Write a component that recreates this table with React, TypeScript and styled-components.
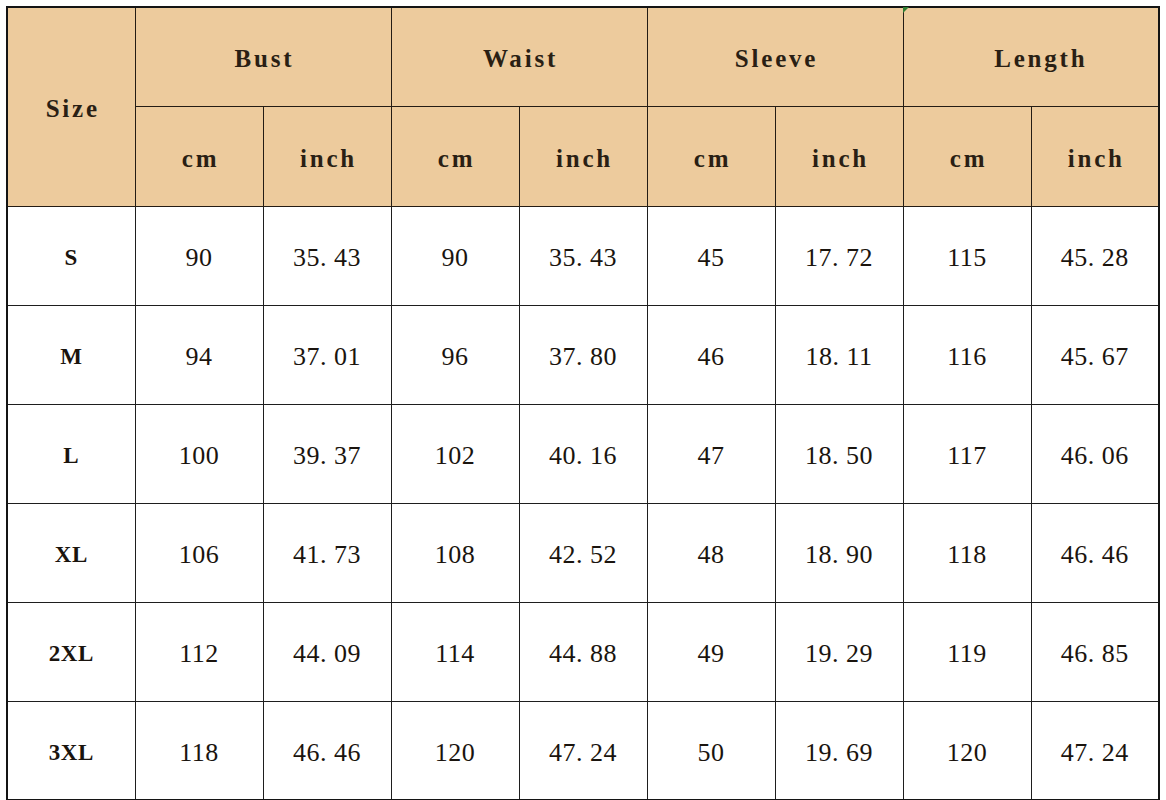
import styled, {createGlobalStyle} from 'styled-components'

const Global = createGlobalStyle`
  html, body {
    margin: 0;
    padding: 0;
    background: #ffffff;
  }
  body {
    width: 1166px;
    height: 800px;
    overflow: hidden;
  }
`

const Page = styled.div`
  padding: 6px 0 0 6px;
`

const Table = styled.table`
  border-collapse: collapse;
  table-layout: fixed;
  width: 1154px;
  border: 2px solid #141414;
  color: #1a140e;
`

const HeadCell = styled.th<{$shift?: number}>`
  position: relative;
  background: #edcb9d;
  border: 1px solid #241c14;
  font-family: 'Liberation Serif', 'DejaVu Serif', serif;
  font-size: 25px;
  font-weight: 700;
  color: #2a1f14;
  letter-spacing: 2.8px;
  text-align: center;
  vertical-align: middle;
  padding: 5px 0 0 ${(p) => 3 + (p.$shift ?? 0)}px;
`

const Marker = styled.span`
  position: absolute;
  left: -1px;
  top: -1px;
  width: 0;
  height: 0;
  border-top: 6px solid #2f7d32;
  border-right: 6px solid transparent;
`

const HeadRow = styled.tr<{$h: number}>`
  height: ${(p) => p.$h}px;
`

const BodyRow = styled.tr`
  height: 99px;
`

const Cell = styled.td<{$size?: boolean}>`
  border: 1px solid #1e1e1e;
  text-align: center;
  vertical-align: middle;
  padding: 5px 0 0 0;
  font-family: 'Liberation Serif', 'DejaVu Serif', serif;
  font-size: ${(p) => (p.$size ? '23px' : '26px')};
  font-weight: ${(p) => (p.$size ? 700 : 400)};
  letter-spacing: 0.5px;
`

const groups = [
  {label: 'Bust', marker: false, shift: 0},
  {label: 'Waist', marker: false, shift: 0},
  {label: 'Sleeve', marker: false, shift: 0},
  {label: 'Length', marker: true, shift: 17},
]

const rows = [
  ['S', '90', '35.43', '90', '35.43', '45', '17.72', '115', '45.28'],
  ['M', '94', '37.01', '96', '37.80', '46', '18.11', '116', '45.67'],
  ['L', '100', '39.37', '102', '40.16', '47', '18.50', '117', '46.06'],
  ['XL', '106', '41.73', '108', '42.52', '48', '18.90', '118', '46.46'],
  ['2XL', '112', '44.09', '114', '44.88', '49', '19.29', '119', '46.85'],
  ['3XL', '118', '46.46', '120', '47.24', '50', '19.69', '120', '47.24'],
]

// numbers in the source are set with a wide full stop, so leave a gap after it
const spaced = (v: string) => v.replace('.', '. ')

export default function App() {
  return (
    <Page>
      <Global />
      <Table>
        <colgroup>
          {Array.from({length: 9}).map((_, i) => (
            <col key={i} style={{width: 128}} />
          ))}
        </colgroup>
        <thead>
          <HeadRow $h={99}>
            <HeadCell rowSpan={2}>Size</HeadCell>
            {groups.map((g) => (
              <HeadCell key={g.label} colSpan={2} $shift={g.shift}>
                {g.marker && <Marker />}
                {g.label}
              </HeadCell>
            ))}
          </HeadRow>
          <HeadRow $h={100}>
            {groups.map((g) => [
              <HeadCell key={g.label + 'cm'}>cm</HeadCell>,
              <HeadCell key={g.label + 'in'}>inch</HeadCell>,
            ])}
          </HeadRow>
        </thead>
        <tbody>
          {rows.map((r) => (
            <BodyRow key={r[0]}>
              {r.map((v, i) => (
                <Cell key={i} $size={i === 0}>
                  {i === 0 ? v : spaced(v)}
                </Cell>
              ))}
            </BodyRow>
          ))}
        </tbody>
      </Table>
    </Page>
  )
}
